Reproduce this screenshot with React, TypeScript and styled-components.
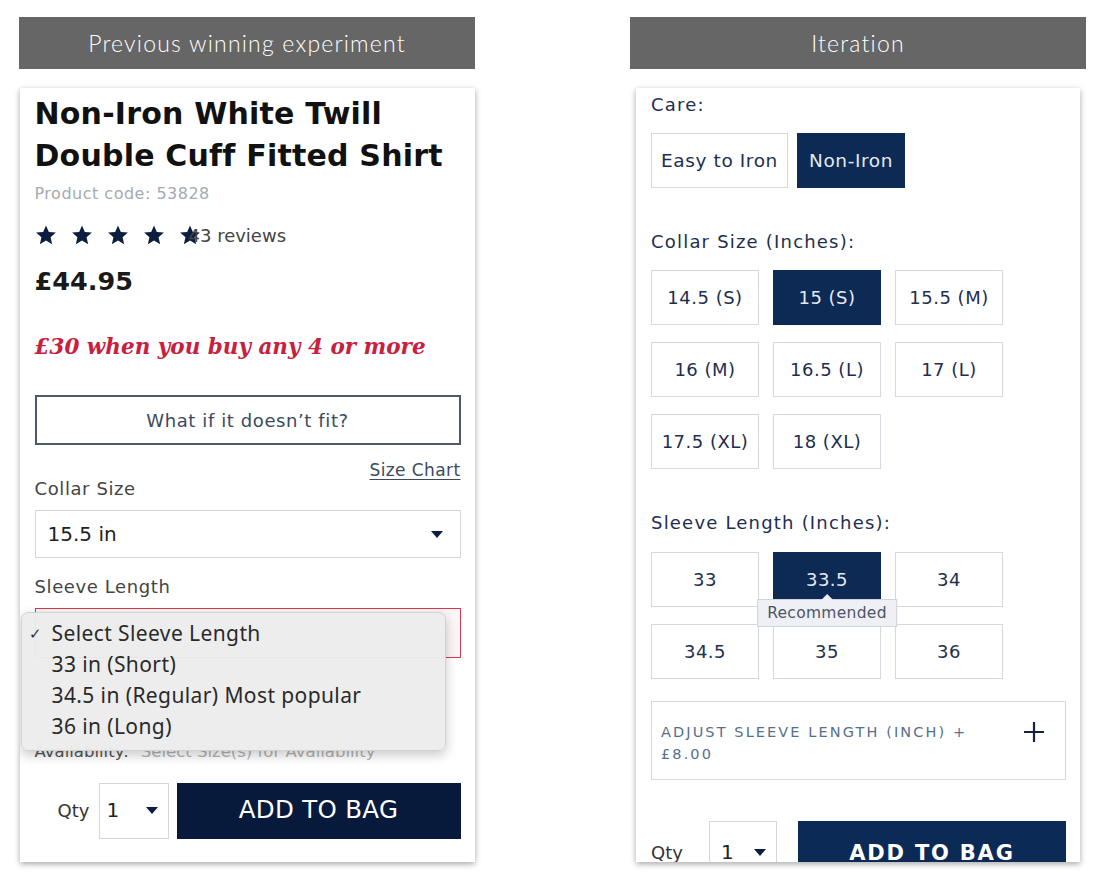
import React from "react";
import styled, { createGlobalStyle } from "styled-components";

const GlobalStyle = createGlobalStyle`
  html, body {
    margin: 0;
    padding: 0;
    background: #ffffff;
  }
  body {
    font-family: "DejaVu Sans", "Open Sans", sans-serif;
  }
  * {
    box-sizing: border-box;
  }
`;

const Page = styled.div`
  display: flex;
  gap: 155px;
  padding: 17px 0 0 19px;
  width: 1106px;
  height: 888px;
  overflow: hidden;
`;

const Column = styled.div`
  width: 456px;
  display: flex;
  flex-direction: column;
  align-items: center;
  gap: 19px;
`;

const Banner = styled.div`
  width: 456px;
  height: 52px;
  background: #666666;
  color: #ffffff;
  font-family: "Lato", sans-serif;
  font-weight: 300;
  font-size: 23px;
  letter-spacing: 1.2px;
  display: flex;
  align-items: center;
  justify-content: center;
`;

const Card = styled.div<{ $width: number }>`
  position: relative;
  width: ${(p) => p.$width}px;
  height: 774px;
  background: #ffffff;
  box-shadow: 0 2px 6px rgba(0, 0, 0, 0.35);
  overflow: hidden;
  display: flex;
  flex-direction: column;
`;

/* ---------- left: previous winning experiment ---------- */

const OldBody = styled.div`
  padding: 5px 14px 0 15px;
  display: flex;
  flex-direction: column;
`;

const Title = styled.h1`
  margin: 0;
  font-size: 30px;
  line-height: 42px;
  font-weight: 700;
  letter-spacing: 0.2px;
  color: #111111;
`;

const ProductCode = styled.div`
  margin-top: 7px;
  font-size: 16px;
  line-height: 20px;
  letter-spacing: 0.5px;
  color: #a3aab3;
`;

const RatingRow = styled.div`
  margin-top: 19px;
  height: 24px;
  display: flex;
  align-items: center;
`;

const Stars = styled.div`
  display: flex;
  gap: 14px;
  color: #0b1e40;
`;

const Reviews = styled.span`
  margin-left: -12px;
  font-size: 18px;
  color: #444444;
`;

const Price = styled.div`
  margin-top: 19px;
  font-size: 25.5px;
  line-height: 30px;
  font-weight: 700;
  color: #1a1a1a;
`;

const Promo = styled.div`
  margin-top: 37px;
  font-family: "DejaVu Serif", "Liberation Serif", serif;
  font-style: italic;
  font-weight: 700;
  font-size: 21.5px;
  line-height: 28px;
  color: #c8203f;
`;

const OutlineButton = styled.div`
  margin-top: 34px;
  height: 50px;
  border: 2px solid #4d5a6e;
  display: flex;
  align-items: center;
  justify-content: center;
  font-size: 18px;
  letter-spacing: 0.6px;
  color: #3b4a60;
`;

const SizeChart = styled.div`
  margin-top: 16px;
  align-self: flex-end;
  font-size: 17px;
  line-height: 18px;
  letter-spacing: 0.4px;
  color: #3b4a60;
  text-decoration: underline;
  text-underline-offset: 3px;
`;

const FieldLabel = styled.div<{ $gap: number }>`
  margin-top: ${(p) => p.$gap}px;
  font-size: 18px;
  line-height: 20px;
  letter-spacing: 0.6px;
  color: #454545;
`;

const SelectBox = styled.div<{ $error?: boolean }>`
  margin-top: 11px;
  height: ${(p) => (p.$error ? 50 : 48)}px;
  border: 1px solid ${(p) => (p.$error ? "#d33a4f" : "#d6d6d6")};
  background: ${(p) => (p.$error ? "#fdf5f6" : "#ffffff")};
  display: flex;
  align-items: center;
  justify-content: space-between;
  padding: 0 17px 0 12px;
  font-size: 20px;
  color: #222222;
`;

const Availability = styled.div`
  margin-top: 84px;
  font-size: 16.5px;
  line-height: 20px;
  color: #555555;
  display: flex;
  gap: 12px;
  span {
    color: #b3b3b3;
  }
`;

const QtyRow = styled.div<{ $top: number }>`
  margin-top: ${(p) => p.$top}px;
  display: flex;
  align-items: flex-start;
  flex-shrink: 0;
`;

const QtyLabel = styled.span<{ $width: number; $top: number; $right?: boolean }>`
  width: ${(p) => p.$width}px;
  margin-top: ${(p) => p.$top}px;
  font-size: 18px;
  line-height: 20px;
  text-align: ${(p) => (p.$right ? "right" : "left")};
  padding-right: ${(p) => (p.$right ? 9 : 0)}px;
  color: #333;
`;

const QtySelect = styled.div<{ $width: number; $textTop: number; $padLeft: number }>`
  width: ${(p) => p.$width}px;
  height: 56px;
  border: 1px solid #d6d6d6;
  display: flex;
  align-items: flex-start;
  justify-content: space-between;
  padding: ${(p) => p.$textTop}px 10px 0 ${(p) => p.$padLeft}px;
  font-size: 20px;
  line-height: 24px;
  color: #222;
  svg {
    margin-top: 9px;
  }
`;

const BagButton = styled.div<{
  $bg: string;
  $size: number;
  $weight: number;
  $gapLeft: number;
  $textTop: number;
  $spacing: number;
}>`
  flex: 1;
  margin-left: ${(p) => p.$gapLeft}px;
  height: 56px;
  padding-top: ${(p) => p.$textTop}px;
  background: ${(p) => p.$bg};
  color: #ffffff;
  font-size: ${(p) => p.$size}px;
  line-height: 28px;
  font-weight: ${(p) => p.$weight};
  letter-spacing: ${(p) => p.$spacing}px;
  text-align: center;
`;

const NativeMenu = styled.div`
  position: absolute;
  top: 524px;
  left: 1px;
  width: 425px;
  height: 139px;
  background: rgba(236, 236, 236, 0.97);
  border: 1px solid #d2d2d2;
  border-radius: 7px;
  box-shadow: 0 4px 12px rgba(0, 0, 0, 0.22);
  padding: 4px 0 0 0;
  display: flex;
  flex-direction: column;
  font-family: "Noto Sans", "Open Sans", sans-serif;
`;

const MenuItem = styled.div`
  height: 31px;
  display: flex;
  align-items: center;
  font-size: 21px;
  letter-spacing: 0.4px;
  color: #2a2a2a;
`;

const Check = styled.span`
  width: 30px;
  padding-left: 7px;
  font-size: 15px;
  color: #333;
`;

/* ---------- right: iteration ---------- */

const NewBody = styled.div`
  padding: 6px 14px 0 15px;
  display: flex;
  flex-direction: column;
  color: #1b2b4b;
`;

const Heading = styled.div<{ $gap: number }>`
  margin-top: ${(p) => p.$gap}px;
  font-size: 18px;
  line-height: 22px;
  letter-spacing: 1.2px;
  color: #1e2e50;
`;

const ChipRow = styled.div<{ $gap: number }>`
  margin-top: ${(p) => p.$gap}px;
  display: flex;
  gap: 9px;
`;

const ChipGrid = styled.div<{ $gap: number }>`
  margin-top: ${(p) => p.$gap}px;
  display: grid;
  grid-template-columns: repeat(3, 108px);
  column-gap: 14px;
  row-gap: 17px;
`;

const Chip = styled.div<{ $active?: boolean; $width?: number; $large?: boolean }>`
  position: relative;
  width: ${(p) => (p.$width ? `${p.$width}px` : "auto")};
  height: 55px;
  padding: 0 4px;
  border: 1px solid ${(p) => (p.$active ? "#0d2a55" : "#d5d9df")};
  background: ${(p) => (p.$active ? "#0d2a55" : "#ffffff")};
  color: ${(p) => (p.$active ? "#e4e9f1" : "#1e2e50")};
  font-size: ${(p) => (p.$large ? 18.5 : 18)}px;
  letter-spacing: ${(p) => (p.$large ? 0.6 : 0.5)}px;
  display: flex;
  align-items: center;
  justify-content: center;
  white-space: nowrap;
`;

const Tooltip = styled.div`
  position: absolute;
  top: calc(100% - 7px);
  left: 50%;
  transform: translateX(-50%);
  z-index: 2;
  padding: 0 9px;
  height: 28px;
  display: flex;
  align-items: center;
  background: #eef0f5;
  border: 1px solid #cfd3da;
  font-size: 15.5px;
  letter-spacing: 0.3px;
  color: #4e5566;
  &::before {
    content: "";
    position: absolute;
    top: -6px;
    left: 50%;
    transform: translateX(-50%);
    border-left: 6px solid transparent;
    border-right: 6px solid transparent;
    border-bottom: 6px solid #eef0f5;
  }
`;

const AdjustBox = styled.div`
  margin-top: 22px;
  height: 79px;
  border: 1px solid #d5d9df;
  display: flex;
  align-items: flex-start;
  justify-content: space-between;
  padding: 19px 20px 0 9px;
`;

const AdjustText = styled.div`
  font-size: 14.5px;
  line-height: 22px;
  letter-spacing: 2.1px;
  color: #55708d;
  text-transform: uppercase;
`;

const Caret = () => (
  <svg width="12" height="7" viewBox="0 0 12 7">
    <path d="M0 0h12L6 7z" fill="#0b1e40" />
  </svg>
);

const Star = () => (
  <svg width="22" height="22" viewBox="0 0 24 24">
    <path
      d="M12 1.5l3.1 7.1 7.7.7-5.8 5.1 1.7 7.6L12 18l-6.7 4 1.7-7.6-5.8-5.1 7.7-.7z"
      fill="currentColor"
    />
  </svg>
);

const Plus = () => (
  <svg width="22" height="22" viewBox="0 0 22 22">
    <path d="M11 1v20M1 11h20" stroke="#15223f" strokeWidth="2.2" />
  </svg>
);

const collarSizes = ["14.5 (S)", "15 (S)", "15.5 (M)", "16 (M)", "16.5 (L)", "17 (L)", "17.5 (XL)", "18 (XL)"];
const sleeveLengths = ["33", "33.5", "34", "34.5", "35", "36"];
const sleeveOptions = ["33 in (Short)", "34.5 in (Regular) Most popular", "36 in (Long)"];

export default function App() {
  return (
    <>
      <GlobalStyle />
      <Page>
        <Column>
          <Banner>Previous winning experiment</Banner>
          <Card $width={455}>
            <OldBody>
              <Title>
                Non-Iron White Twill
                <br />
                Double Cuff Fitted Shirt
              </Title>
              <ProductCode>Product code: 53828</ProductCode>
              <RatingRow>
                <Stars>
                  <Star />
                  <Star />
                  <Star />
                  <Star />
                  <Star />
                </Stars>
                <Reviews>43 reviews</Reviews>
              </RatingRow>
              <Price>£44.95</Price>
              <Promo>£30 when you buy any 4 or more</Promo>
              <OutlineButton>What if it doesn’t fit?</OutlineButton>
              <SizeChart>Size Chart</SizeChart>
              <FieldLabel $gap={0}>Collar Size</FieldLabel>
              <SelectBox>
                15.5 in
                <Caret />
              </SelectBox>
              <FieldLabel $gap={19}>Sleeve Length</FieldLabel>
              <SelectBox $error />
              <Availability>
                Availability: <span>Select Size(s) for Availability</span>
              </Availability>
              <QtyRow $top={21}>
                <QtyLabel $width={64} $top={18} $right>
                  Qty
                </QtyLabel>
                <QtySelect $width={70} $textTop={14} $padLeft={7}>
                  1
                  <Caret />
                </QtySelect>
                <BagButton $bg="#071a3c" $size={24.5} $weight={400} $gapLeft={8} $textTop={13} $spacing={0.3}>
                  ADD TO BAG
                </BagButton>
              </QtyRow>
            </OldBody>
            <NativeMenu>
              <MenuItem>
                <Check>✓</Check>Select Sleeve Length
              </MenuItem>
              {sleeveOptions.map((o) => (
                <MenuItem key={o}>
                  <Check />
                  {o}
                </MenuItem>
              ))}
            </NativeMenu>
          </Card>
        </Column>

        <Column>
          <Banner>Iteration</Banner>
          <Card $width={444}>
            <NewBody>
              <Heading $gap={0}>Care:</Heading>
              <ChipRow $gap={17}>
                <Chip $width={137} $large>
                  Easy to Iron
                </Chip>
                <Chip $width={108} $active $large>
                  Non-Iron
                </Chip>
              </ChipRow>
              <Heading $gap={43}>Collar Size (Inches):</Heading>
              <ChipGrid $gap={17}>
                {collarSizes.map((s) => (
                  <Chip key={s} $active={s === "15 (S)"}>
                    {s}
                  </Chip>
                ))}
              </ChipGrid>
              <Heading $gap={43}>Sleeve Length (Inches):</Heading>
              <ChipGrid $gap={18}>
                {sleeveLengths.map((s) => (
                  <Chip key={s} $active={s === "33.5"}>
                    {s}
                    {s === "33.5" && <Tooltip>Recommended</Tooltip>}
                  </Chip>
                ))}
              </ChipGrid>
              <AdjustBox>
                <AdjustText>
                  Adjust sleeve length (inch) +
                  <br />
                  £8.00
                </AdjustText>
                <Plus />
              </AdjustBox>
              <QtyRow $top={41}>
                <QtyLabel $width={58} $top={22}>
                  Qty
                </QtyLabel>
                <QtySelect $width={68} $textTop={18} $padLeft={11}>
                  1
                  <Caret />
                </QtySelect>
                <BagButton $bg="#0c2a56" $size={21} $weight={700} $gapLeft={21} $textTop={18} $spacing={1.8}>
                  ADD TO BAG
                </BagButton>
              </QtyRow>
            </NewBody>
          </Card>
        </Column>
      </Page>
    </>
  );
}
